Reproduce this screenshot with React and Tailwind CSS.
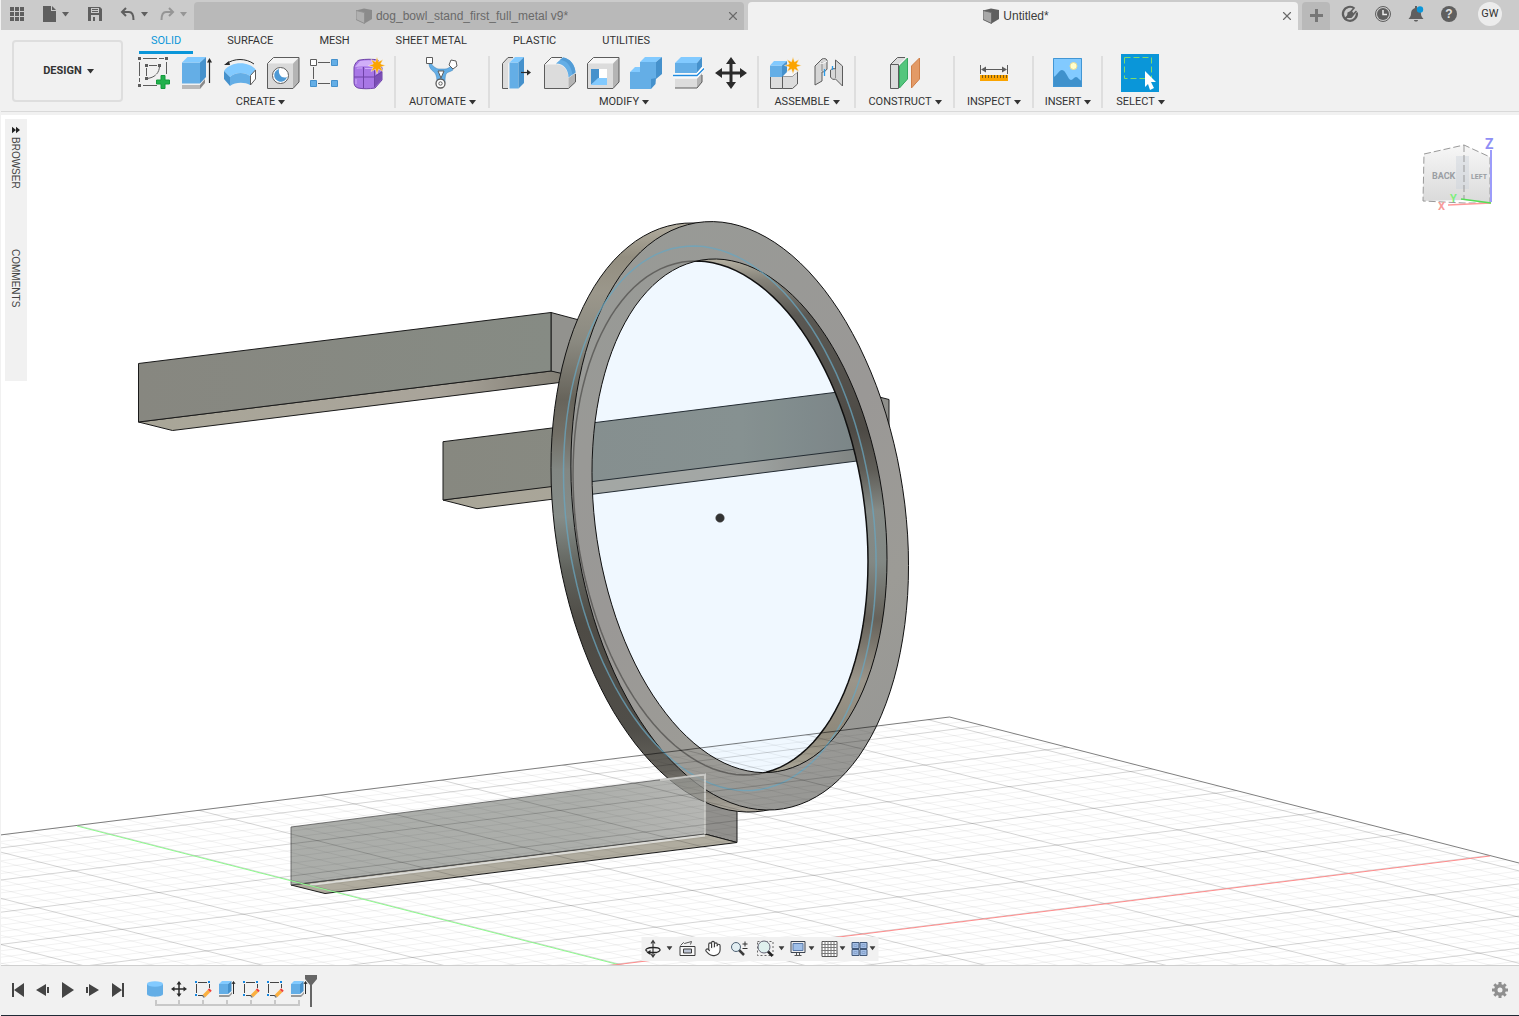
import React, { useState } from 'react';
import { Hand, X } from 'lucide-react';

const BLUE = '#64aee6';
const BLUE_LIGHT = '#82caff';
const BLUE_DARK = '#4591cc';
const INK = '#5c5c5c';

// Points of a slanted ellipse, given by its centre and half extents
const ellipse = (cx, cy, w, h, slant = 0.169) => {
  const k = Math.sqrt(1 - slant * slant);
  const pts = [];
  for (let i = 0; i < 120; i++) {
    const t = (i / 120) * Math.PI * 2;
    const x = cx + w * Math.cos(t);
    const y = cy + h * (slant * Math.cos(t) + k * Math.sin(t));
    pts.push(`${x.toFixed(1)} ${y.toFixed(1)}`);
  }
  return `M${pts.join('L')}Z`;
};

const star = (cx, cy, outer, inner, spikes = 8) =>
  Array.from({ length: spikes * 2 }, (_, i) => {
    const r = i % 2 ? inner : outer;
    const a = (i * Math.PI) / spikes - Math.PI / 2;
    return `${(cx + r * Math.cos(a)).toFixed(2)},${(cy + r * Math.sin(a)).toFixed(2)}`;
  }).join(' ');

const Icon = ({ size = 32, className = '', children }) => (
  <svg
    width={size}
    height={size}
    viewBox={`0 0 ${size} ${size}`}
    className={`shrink-0 overflow-visible ${className}`}
    fill="none"
    aria-hidden="true"
  >
    {children}
  </svg>
);

const Caret = ({ className = '' }) => (
  <svg width="7" height="5" viewBox="0 0 7 5" className={`shrink-0 ${className}`} fill="currentColor" aria-hidden="true">
    <path d="M0 0h7L3.500 4.500z" />
  </svg>
);

/* ---------- Ribbon icons ---------- */

const SketchIcon = () => (
  <Icon>
    <path d="M6 1.500h21M2.500 5v20M6 28.500h14M29.500 5v12" stroke={INK} strokeDasharray="14 2" />
    <path d="M12 8.500h8M9.500 11v8M22.500 9c0 7-5 12-13 12.500" stroke={INK} strokeDasharray="9 1" />
    <path d="M1 0h3v3H1zM28 0h3v3h-3zM1 27h3v3H1zM8 7h3v3H8zM21 7h3v3h-3zM8 20h3v3H8z" fill={INK} />
    <path d="M24 18.500h4V23h4.500v4H28v4.500h-4V27h-4.500v-4H24z" fill="#22b14c" stroke="#159a3c" />
  </Icon>
);

const ExtrudeIcon = () => (
  <Icon>
    <path d="M2 28h18v4H2z" fill="#b9b9b9" />
    <path d="M20 28l5-6v4l-5 6z" fill="#8a8a8a" />
    <path d="M2 5.500h18v21H2z" fill={BLUE} />
    <path d="M2 5.500L7.500 0H26l-6 5.500z" fill={BLUE_LIGHT} />
    <path d="M20 5.500L26 0v20l-6 6.500z" fill={BLUE_DARK} />
    <path d="M29.500 3v23" stroke="#2b2b2b" strokeWidth="1.200" />
    <path d="M27 5.500L29.500 1 32 5.500z" fill="#2b2b2b" />
  </Icon>
);

const RevolveIcon = () => (
  <Icon>
    <path d="M1 14C8 4 26 4 33 13l-6 6C22 15 12 15 7 20z" fill={BLUE_LIGHT} />
    <path d="M7 20c5-5 15-5 20-1v9c-5-3-15-3-20 1z" fill={BLUE} />
    <path d="M1 14l6 6v9l-6-7z" fill={BLUE_DARK} />
    <path d="M27.500 18.500L32.500 13v9l-5 6z" fill="#fff" stroke={INK} />
    <path d="M3 7C11 1 23 1 31 7" stroke="#2b2b2b" />
    <path d="M1 8l5-4 1 4z" fill="#2b2b2b" />
  </Icon>
);

const HoleIcon = () => (
  <Icon>
    <path d="M1.500 6.500l6-6H33L27 6.500z" fill="#f4f4f4" />
    <path d="M27 6.500l6-6v24.500l-6 6.500z" fill="#b4b4b4" />
    <path d="M1.500 6.500H27v25H1.500z" fill="#d9d9d9" />
    <path d="M1.500 6.500l6-6H33V25l-6 6.500H1.500z" stroke={INK} />
    <circle cx="14.500" cy="18.500" r="8" fill="#fff" stroke={INK} />
    <path d="M13 12a6.500 6.500 0 1 0 8 8c-5 2-9-2-8-8z" fill="#4d9ad6" />
  </Icon>
);

const PatternIcon = () => (
  <Icon>
    <path d="M9 5.500h12M4.500 10v12M9 26.500h12" stroke={INK} />
    <path d="M1.500 2.500h6v6h-6z" fill="#fff" stroke={INK} />
    <path d="M22.500 2.500h6v6h-6zM1.500 23.500h6v6h-6zM22.500 23.500h6v6h-6z" fill={BLUE} stroke={BLUE_DARK} />
  </Icon>
);

const FormIcon = () => (
  <Icon>
    <path d="M2 11c0-3 3-8 6-8 5-1 13-1 18 0l4 8v12l-7 8c-6 1-12 1-17 0-3-1-4-3-4-6z" fill="#a877e6" stroke="#6f43a8" />
    <path d="M3 10l5-6c6-1 11-1 17 0l-4 6c-6-1-12-1-18 0z" fill="#d0aef8" />
    <path d="M23 19l7-5v8l-7 8z" fill="#7b4fb5" />
    <path d="M11.500 10v21M2 20h20M22.500 10v20M22 20l8-5" stroke="#6f43a8" />
    <path d="M5 12c0-1 1-1 5-1M4 22v5M13 11.500h8" stroke="#d0aef8" />
    <polygon points={star(25, 8.5, 8.5, 4)} fill="#fba400" stroke="#f1f1f1" strokeWidth="0.500" />
  </Icon>
);

const AutomateIcon = () => (
  <Icon>
    <path d="M5 6c2 4 6 6 8 6h6c2 0 4-1 6-3l2 4c-3 2-6 2-7 4-1 3-1 5-1 9h-8c0-6-1-9-3-11C5 13 3 10 3 7z" fill={BLUE} stroke="#3f80b5" strokeWidth="0.500" />
    <path d="M12 14h6l-3 7z" fill="#fff" stroke={INK} />
    <path d="M0.500 0.500h6v6h-6z" fill="#fff" stroke={INK} />
    <path d="M25 3l5 1 1 5-4 3-4-4z" fill="#fff" stroke={INK} />
    <circle cx="14.500" cy="26.500" r="4.500" fill="#fff" stroke={INK} strokeWidth="1.300" />
    <circle cx="14.500" cy="26.500" r="1.700" stroke={INK} />
  </Icon>
);

const PressPullIcon = () => (
  <Icon>
    <path d="M2.500 6.500L8 .5h6l-6 6v25H2.500z" fill="#dcdcdc" />
    <path d="M8 .5L2.500 6.500v25H8M8 .5h5" stroke={INK} />
    <path d="M9.500 5.500h9v26h-9z" fill={BLUE} />
    <path d="M9.500 5.500L15 0h9l-5.500 5.500z" fill={BLUE_LIGHT} />
    <path d="M18.500 5.500L24 0v26l-5.500 5.500z" fill={BLUE_DARK} />
    <path d="M21 15.500h7" stroke="#2b2b2b" strokeWidth="1.200" />
    <path d="M27 12.500l4 3-4 3z" fill="#2b2b2b" />
  </Icon>
);

const FilletIcon = () => (
  <Icon>
    <path d="M1.500 7.500l7-7h11l-6 7c7 0 12 6 12 14v10h-24z" fill="#dcdcdc" />
    <path d="M1.500 7.500l7-7H19l-6 7z" fill="#f6f6f6" />
    <path d="M25.500 21l7-5v9l-7 6.500z" fill="#b4b4b4" />
    <path d="M13 6.500l7-6c7 1 12 7 12.500 15l-7 5c0-8-5-14-12.500-14z" fill={BLUE} />
    <path d="M20 .5c7 1 12 7 12.500 15l-3 2C28 8 23 3 17 3z" fill="#529cd6" />
    <path d="M19 .5H8.500l-7 7v24h24l7-6.500v-8" stroke={INK} />
  </Icon>
);

const ShellIcon = () => (
  <Icon>
    <path d="M1.500 6.500l6-6H33L27 6.500z" fill="#f6f6f6" />
    <path d="M27 6.500l6-6V25l-6 6.500z" fill="#b4b4b4" />
    <path d="M1.500 6.500H27v25H1.500z" fill="#dcdcdc" />
    <path d="M1.500 6.500l6-6H33V25l-6 6.500H1.500z" stroke={INK} />
    <path d="M5 12h16v16H5z" fill="#fff" />
    <path d="M5 12h8v9l-8 7z" fill={BLUE_DARK} />
    <path d="M5 28l7-7h9v7z" fill={BLUE_LIGHT} />
  </Icon>
);

const CombineIcon = () => (
  <Icon>
    <path d="M1 15h10V5h16v17h-5v10H1z" fill={BLUE} />
    <path d="M1 15l5-5h5v5zM11 5l5-5h17l-6 5z" fill={BLUE_LIGHT} />
    <path d="M27 5l6-5v17l-6 5zM22 22h5l-5 10zM27 21l-.5 6L22 32V22z" fill={BLUE_DARK} />
  </Icon>
);

const SplitIcon = () => (
  <Icon>
    <path d="M3 6h22v10H3z" fill={BLUE} />
    <path d="M3 6l6-6h21l-5 6z" fill={BLUE_LIGHT} />
    <path d="M25 6l5-6v10l-5 6z" fill={BLUE_DARK} />
    <path d="M3 22h22l5-6v9l-5 6H3z" fill="#dcdcdc" />
    <path d="M25 22l5-6v9l-5 6z" fill="#b4b4b4" />
    <path d="M3 31h22l5-6v-7" stroke={INK} />
    <path d="M1 18.500h24l7-8" stroke="#fff" strokeWidth="4" />
    <path d="M1 18.500h24l7-7" stroke="#1f8ade" strokeWidth="1.300" />
  </Icon>
);

const MoveIcon = ({ size = 32 }) => (
  <svg width={size} height={size} viewBox="0 0 32 32" className="shrink-0" fill="#2b2b2b" aria-hidden="true">
    <path d="M16 0l5 7h-3.500v7.500H25V11l7 5-7 5v-3.500h-7.500V25H21l-5 7-5-7h3.500v-7.500H7V21l-7-5 7-5v3.500h7.500V7H11z" />
  </svg>
);

const ComponentIcon = () => (
  <Icon>
    <path d="M1.500 19h12v12.500h-12z" fill="#dcdcdc" stroke={INK} />
    <path d="M13.500 19h10l5-4v12l-5 4.500h-10z" fill="#dcdcdc" stroke={INK} />
    <path d="M13.500 19l4-4h11l-5 4z" fill="#f8f8f8" />
    <path d="M1 8.500h12V20H1z" fill={BLUE} />
    <path d="M1 8.500L5 4h13l-5 4.500z" fill={BLUE_LIGHT} />
    <path d="M13 8.500L18 4v11l-5 5z" fill={BLUE_DARK} />
    <polygon points={star(24, 8.500, 8.500, 4)} fill="#fba400" stroke="#f1f1f1" strokeWidth="0.500" />
  </Icon>
);

const JointIcon = () => (
  <Icon>
    <path d="M3 28V9l7-7c2-.8 4-.5 5 1v9c-1 2-3 3-5 3v9z" fill="#d6d6d6" stroke={INK} />
    <path d="M10 5v9" stroke="#8a8a8a" />
    <path d="M8 6c2 1 5 0 7-2" stroke="#fff" />
    <path d="M30.500 29V9l-7-6v9c-2-1-4 0-5 1v7c1 2 3 3 5 2z" fill="#d6d6d6" stroke={INK} />
    <path d="M23.500 12v9" stroke="#8a8a8a" />
    <path d="M12.500 12v7M20.500 9v4" stroke="#2b9be8" strokeWidth="1.300" />
  </Icon>
);

const PlaneIcon = () => (
  <Icon>
    <path d="M1.500 7.500l7-7H17l-8 7v24H1.500z" fill="#dcdcdc" />
    <path d="M16 .5H8.500l-7 7v24h8v-24h-8" stroke={INK} />
    <path d="M10.500 9l8-8v21l-8 9z" fill="#54c67d" stroke="#35a65f" />
    <path d="M22.500 9l8-8v21l-8 9z" fill="#e39a66" stroke="#cf7f48" />
  </Icon>
);

const MeasureIcon = () => (
  <Icon>
    <path d="M2.500 8v9M29.500 8v9M5 12.500h22" stroke={INK} />
    <path d="M3 12.500l5-3v6zM29 12.500l-5-3v6z" fill={INK} />
    <path d="M2 18h28v6H2z" fill="#fba400" />
    <path d="M4.500 18v3M7.500 18v3M10.500 18v3M13.500 18v3M16.500 18v3M19.500 18v3M22.500 18v3M25.500 18v3M28.500 18v3" stroke="#7c5a12" />
  </Icon>
);

const ImageIcon = () => (
  <Icon>
    <path d="M1 1h29v29H1z" fill={BLUE_LIGHT} />
    <path d="M1 20c3 0 6-7 9-7 4 0 6 10 9 10 2 0 3-3 5-3s3 3 6 4v6H1z" fill="#3f91cc" />
    <circle cx="21.500" cy="9" r="3.500" fill="#ffffcc" stroke="#e6dd9a" />
    <path d="M1.500 1.500h28v28h-28z" stroke="#4296d4" />
  </Icon>
);

const SelectIcon = () => (
  <svg width="38" height="38" viewBox="0 0 38 38" fill="none" className="bg-[#0a96d9]" aria-hidden="true">
    <path d="M3.500 3.500h27v21h-27z" stroke="#7ddc6b" strokeDasharray="6 3" />
    <path d="M24 17l11 11h-5l3 6-4 2-2-6-3 3z" fill="#fff" />
  </svg>
);

const groups = [
  { name: 'CREATE', width: 'w-[270px]', icons: [
    ['Create Sketch', SketchIcon], ['Extrude', ExtrudeIcon], ['Revolve', RevolveIcon],
    ['Hole', HoleIcon], ['Rectangular Pattern', PatternIcon], ['Create Form', FormIcon],
  ] },
  { name: 'AUTOMATE', width: 'w-[94px]', icons: [['Automated Modeling', AutomateIcon]] },
  { name: 'MODIFY', width: 'w-[269px]', icons: [
    ['Press Pull', PressPullIcon], ['Fillet', FilletIcon], ['Shell', ShellIcon],
    ['Combine', CombineIcon], ['Split Body', SplitIcon], ['Move/Copy', MoveIcon],
  ] },
  { name: 'ASSEMBLE', width: 'w-[97px]', icons: [['New Component', ComponentIcon], ['Joint', JointIcon]] },
  { name: 'CONSTRUCT', width: 'w-[99px]', icons: [['Offset Plane', PlaneIcon]] },
  { name: 'INSPECT', width: 'w-[79px]', icons: [['Measure', MeasureIcon]] },
  { name: 'INSERT', width: 'w-[69px]', icons: [['Canvas', ImageIcon]] },
  { name: 'SELECT', width: 'w-[76px]', icons: [['Select', SelectIcon]] },
];

const ribbonTabs = ['SOLID', 'SURFACE', 'MESH', 'SHEET METAL', 'PLASTIC', 'UTILITIES'];

/* ---------- Title bar ---------- */

const DocCube = ({ dim }) => (
  <svg width="16" height="16" viewBox="0 0 16 16" className={dim ? 'shrink-0 opacity-50' : 'shrink-0'} aria-hidden="true">
    <path d="M0 2.500L8 .5l8 1.500v9L8.500 15.500 0 11.500z" fill="#5f5f5f" />
    <path d="M0 2.500l8.500 2v11L0 11.500z" fill="#a9a9a9" />
    <path d="M0 2.500l8.500 2v11L0 11.500z" fill="none" stroke="#6b6b6b" />
  </svg>
);

const DocTab = ({ title, active }) => (
  <div
    className={`flex h-7 min-w-0 flex-1 items-center rounded-t pr-1 text-xs ${
      active ? 'bg-[#f1f1f1] text-[#3c3c3c]' : 'bg-[#b9b9b9] text-[#6a6a6a]'
    }`}
  >
    <button type="button" className="flex min-w-0 flex-1 items-center justify-center gap-1 pl-1">
      <DocCube dim={!active} />
      <span className="truncate">{title}</span>
    </button>
    <button type="button" aria-label={`Close ${title}`} className="text-[#6a6a6a]">
      <X size={14} strokeWidth={2} />
    </button>
  </div>
);

const TitleBar = () => (
  <div className="flex h-[30px] items-end bg-[#cbcbcb] text-[#5f5f5f]">
    <div className="flex h-7 w-[193px] shrink-0 items-center pb-1 pl-[9px]">
      <button type="button" aria-label="Data panel">
        <Icon size={14}>
          <path d="M0 0h4v4H0zM5 0h4v4H5zM10 0h4v4h-4zM0 5h4v4H0zM5 5h4v4H5zM10 5h4v4h-4zM0 10h4v4H0zM5 10h4v4H5zM10 10h4v4h-4z" fill="currentColor" />
        </Icon>
      </button>
      <button type="button" aria-label="File" className="ml-[19px] flex items-center gap-[5px]">
        <Icon size={14}>
          <path d="M0 -1h8v5h5v11H0zM9 -1l4 4H9z" fill="currentColor" />
        </Icon>
        <Caret />
      </button>
      <button type="button" aria-label="Save" className="ml-[19px]">
        <Icon size={14}>
          <path fillRule="evenodd" d="M0 0h12l2 2v12H0zM3 1v5h8V1zM3 8v6h8V8zM4 2h6v1H4zM4 4h6v1H4zM5 10h2v4H5z" fill="currentColor" />
        </Icon>
      </button>
      <button type="button" aria-label="Undo" className="ml-[19px] flex items-center gap-[6px]">
        <Icon size={14}>
          <path d="M5 1L1 5l4 4M1.500 5H8c3 0 4.500 3 4.500 8" stroke="currentColor" strokeWidth="2" />
        </Icon>
        <Caret />
      </button>
      <button type="button" aria-label="Redo" className="ml-[12px] flex items-center gap-[6px] text-[#969696]">
        <Icon size={14}>
          <path d="M9 1l4 4-4 4M12.500 5H6C3 5 1.500 8 1.500 13" stroke="currentColor" strokeWidth="2" />
        </Icon>
        <Caret />
      </button>
    </div>
    <div className="flex min-w-0 flex-1 gap-1">
      <DocTab title="dog_bowl_stand_first_full_metal v9*" />
      <DocTab title="Untitled*" active />
    </div>
    <button type="button" aria-label="New design" className="ml-1 flex h-7 w-7 shrink-0 items-center justify-center rounded-t bg-[#b9b9b9] pb-px text-[#777]">
      <Icon size={13}>
        <path d="M5 0h3v5h5v3H8v5H5V8H0V5h5z" fill="currentColor" />
      </Icon>
    </button>
    <div className="flex h-7 w-[189px] shrink-0 items-center gap-[17px] pb-1 pl-3">
      <button type="button" aria-label="Extensions">
        <Icon size={16}>
          <path d="M12.500 2.500A7 7 0 1 0 14.800 6.500" stroke="currentColor" strokeWidth="2.200" />
          <path d="M2.500 13.500l4-4" stroke="currentColor" strokeWidth="2.200" />
          <path d="M5.500 6.500l4-2 3 4-3 3.500H5z" fill="currentColor" />
          <path d="M9 5.500l3-3.500M11.500 8l3-3" stroke="currentColor" strokeWidth="1.600" />
        </Icon>
      </button>
      <button type="button" aria-label="Job status">
        <Icon size={16}>
          <circle cx="8" cy="8" r="7.500" stroke="currentColor" />
          <circle cx="8" cy="8" r="6" fill="currentColor" />
          <path d="M8 4v4.500h4" stroke="#eee" strokeWidth="1.500" />
        </Icon>
      </button>
      <button type="button" aria-label="Notifications">
        <Icon size={16}>
          <path d="M7 0h2v2c3 1 4 3 4 6 0 2 1 3 2.500 5H.500C2 11 3 10 3 8c0-3 1-5 4-6zM6 14h4c0 2-4 2-4 0z" fill="currentColor" />
          <circle cx="12" cy="3.500" r="3.200" fill="#0a96d9" />
        </Icon>
      </button>
      <button type="button" aria-label="Help" className="flex h-4 w-4 items-center justify-center rounded-full bg-[#5f5f5f] text-xs font-bold text-[#e0e0e0]">
        ?
      </button>
      <button type="button" aria-label="Account" className="ml-1 flex h-6 w-6 items-center justify-center rounded-full bg-[#ececec] font-[Roboto,sans-serif] text-[11px] text-[#333]">
        GW
      </button>
    </div>
  </div>
);

/* ---------- Ribbon ---------- */

const Ribbon = () => {
  const [activeTab, setActiveTab] = useState('SOLID');

  return (
    <div className="flex h-[85px] border-b-[3px] border-[#f1f1f1] bg-[#f1f1f1] font-[Roboto,sans-serif] text-[11px] text-[#333]">
      <div className="flex flex-1 border-b border-[#d9d9d9] pl-[11px]">
        <button
          type="button"
          className="mt-[10px] flex h-[62px] w-[111px] shrink-0 items-center justify-center gap-[5px] rounded border-2 border-[#dedede] pl-[2px] font-bold"
        >
          DESIGN <Caret />
        </button>
        <div className="ml-[3px] flex min-w-0 flex-1 flex-col">
          <nav className="flex h-6 shrink-0 gap-[22px] pl-[13px]">
            {ribbonTabs.map((tab) => (
              <button
                key={tab}
                type="button"
                onClick={() => setActiveTab(tab)}
                className={`border-b-[3px] px-3 pt-px leading-5 whitespace-nowrap ${
                  tab === activeTab ? 'border-[#0a96d9] text-[#0a96d9]' : 'border-transparent'
                }`}
              >
                {tab}
              </button>
            ))}
          </nav>
          <div className="flex pt-[2px]">
            {groups.map((group) => (
              <div
                key={group.name}
                className={`flex h-[52px] shrink-0 flex-col items-center border-r-2 border-[#dedede] last:border-transparent ${group.width}`}
              >
                <div className="flex h-[34px] shrink-0 items-center gap-[11px]">
                  {group.icons.map(([label, Glyph]) => (
                    <button key={label} type="button" aria-label={label}>
                      <Glyph />
                    </button>
                  ))}
                </div>
                <button type="button" className="mt-[5px] flex shrink-0 items-center gap-[3px] pl-px leading-[14px]">
                  {group.name} <Caret />
                </button>
              </div>
            ))}
          </div>
        </div>
      </div>
    </div>
  );
};

/* ---------- 3D canvas ---------- */

const frontOuter = ellipse(739.7, 515.8, 168.8, 294.2);
const frontInner = ellipse(739.5, 515.8, 147.5, 256.8);
const backOuter = ellipse(720, 517.5, 169, 294.5);
const backInner = ellipse(720.5, 518, 147.5, 257);
const sketchCircle = ellipse(719.8, 518.3, 156.3, 272.3);

// Two families of nearly parallel lines make the ground grid
const gridLines = [];
for (let i = -4; i < 80; i++) {
  const b = 848 + 6.43 * i;
  gridLines.push({ d: `M0 ${b.toFixed(1)}L1519 ${(b - 189.1).toFixed(1)}`, major: i % 5 === 0 });
}
for (let j = -36; j < 40; j++) {
  const b = 805.7 - 9.24 * j;
  gridLines.push({ d: `M0 ${b.toFixed(1)}L1519 ${(b + 388.6).toFixed(1)}`, major: j % 5 === 0 });
}

const MiddleBar = () => (
  <g stroke="#1a1a1a" strokeLinejoin="round">
    <path d="M443 500l34 8.700L889 457v-10l-29-2z" fill="url(#under)" />
    <path d="M852 390l37 9.500V449l-37-2z" fill="#8f8f8b" />
    <path d="M443 441.700L870 388v59.300L443 500z" fill="url(#barFace)" />
  </g>
);

const Scene = () => (
  <svg viewBox="1 115 1518 850" preserveAspectRatio="xMidYMid slice" className="absolute inset-0 h-full w-full" role="img" aria-label="Model view">
    <defs>
      <linearGradient id="barFace">
        <stop offset="0" stopColor="#878880" />
        <stop offset="0.700" stopColor="#888c84" />
        <stop offset="1" stopColor="#7b7d78" />
      </linearGradient>
      <linearGradient id="topBar">
        <stop offset="0" stopColor="#878780" />
        <stop offset="1" stopColor="#868b84" />
      </linearGradient>
      <linearGradient id="under">
        <stop offset="0" stopColor="#a9a698" />
        <stop offset="0.650" stopColor="#a9a49a" />
        <stop offset="1" stopColor="#77746a" />
      </linearGradient>
      <linearGradient id="lowerFace">
        <stop offset="0" stopColor="#8b8e89" />
        <stop offset="0.700" stopColor="#8c8f8a" />
        <stop offset="1" stopColor="#999a96" />
      </linearGradient>
      <linearGradient id="side" gradientUnits="userSpaceOnUse" x1="0" y1="222" x2="0" y2="812">
        <stop offset="0" stopColor="#b3aea0" />
        <stop offset="0.060" stopColor="#938e80" />
        <stop offset="0.120" stopColor="#9b978b" />
        <stop offset="0.200" stopColor="#8b8a81" />
        <stop offset="0.300" stopColor="#67645b" />
        <stop offset="0.360" stopColor="#726f66" />
        <stop offset="0.420" stopColor="#828783" />
        <stop offset="0.500" stopColor="#858c88" />
        <stop offset="0.590" stopColor="#60625c" />
        <stop offset="0.680" stopColor="#4e4b45" />
        <stop offset="0.860" stopColor="#504e49" />
        <stop offset="0.930" stopColor="#64625c" />
        <stop offset="1" stopColor="#b0aba0" />
      </linearGradient>
      <linearGradient id="wall" gradientUnits="userSpaceOnUse" x1="0" y1="259" x2="0" y2="773">
        <stop offset="0" stopColor="#b5b1a2" />
        <stop offset="0.040" stopColor="#858279" />
        <stop offset="0.110" stopColor="#5a5853" />
        <stop offset="0.330" stopColor="#4d4a45" />
        <stop offset="0.410" stopColor="#5f5d57" />
        <stop offset="0.490" stopColor="#858a86" />
        <stop offset="0.590" stopColor="#828884" />
        <stop offset="0.700" stopColor="#66625a" />
        <stop offset="0.820" stopColor="#9a958a" />
        <stop offset="0.920" stopColor="#8f897b" />
        <stop offset="1" stopColor="#aaa697" />
      </linearGradient>
      <linearGradient id="face" gradientUnits="userSpaceOnUse" x1="570" y1="300" x2="910" y2="700">
        <stop offset="0" stopColor="#989a96" />
        <stop offset="0.500" stopColor="#9a9896" />
        <stop offset="0.800" stopColor="#9c9b96" />
        <stop offset="1" stopColor="#989895" />
      </linearGradient>
      <clipPath id="hole"><path d={frontInner} /></clipPath>
      <clipPath id="backHole"><path d={backInner} /></clipPath>
      <clipPath id="faceOnly"><path d={`${frontOuter}${frontInner}`} clipRule="evenodd" /></clipPath>
      <clipPath id="ground"><path d="M0 835L949.500 717 1519 863v160H0z" /></clipPath>
    </defs>

    <rect x="0" y="115" width="1519" height="850" fill="#fff" />

    {/* Upper leg */}
    <g stroke="#1a1a1a" strokeLinejoin="round">
      <path d="M138.500 422l34 8.500L600 377.500 551 371z" fill="url(#under)" />
      <path d="M551 312.500l45 12v57L551 371z" fill="#92928e" />
      <path d="M138.500 363.500L551 312.500V371L138.500 422z" fill="url(#topBar)" />
    </g>

    <MiddleBar />

    {/* Lower leg, end and underside */}
    <g stroke="#1a1a1a" strokeLinejoin="round">
      <path d="M705 774l32 9v59.500l-32-8.500z" fill="#91908d" />
      <path d="M291 885l34 8.500L737 842.500 705 834z" fill="#b0ac9f" />
    </g>

    {/* Ring */}
    <path d={backOuter} fill="url(#side)" stroke="#111" />
    <path d={`${frontOuter}${frontInner}`} fillRule="evenodd" fill="url(#face)" />
    <g clipPath="url(#hole)">
      <path d={frontInner} fill="url(#wall)" />
      <g clipPath="url(#backHole)">
        <path d={backInner} fill="#fff" />
        <MiddleBar />
        <path d={backInner} fill="#76bfff" fillOpacity="0.110" />
      </g>
      <path d={backInner} fill="none" stroke="#111" strokeWidth="1.500" />
    </g>
    <path d={backInner} clipPath="url(#faceOnly)" fill="none" stroke="#555451" strokeOpacity="0.800" strokeWidth="1.500" />
    <path d={frontOuter} fill="none" stroke="#111" />
    <path d={frontInner} fill="none" stroke="#111" />
    <path d={sketchCircle} fill="none" stroke="#69a6bf" strokeOpacity="0.750" strokeWidth="1.500" />
    <circle cx="720" cy="518" r="4.300" fill="#333" stroke="#555" strokeWidth="0.500" />

    {/* Lower leg, highlighted face */}
    <path d="M291 827l414-53v60l-414 51z" fill="url(#lowerFace)" fillOpacity="0.720" stroke="#555" strokeWidth="0.800" />
    <path d="M660 780l45-5.500V834" fill="none" stroke="#dcdcd8" strokeOpacity="0.800" strokeWidth="2" />
    <path d="M705 835.500L310 885" fill="none" stroke="#dcdcd8" strokeWidth="2" />

    <g clipPath="url(#ground)" stroke="#000">
      {gridLines.map((line) => (
        <path key={line.d} d={line.d} strokeOpacity={line.major ? 0.17 : 0.055} />
      ))}
    </g>
    <path d="M0 835L949.500 717 1519 863" fill="none" stroke="#000" strokeOpacity="0.500" />
    <path d="M77 826l543 139" stroke="#8dfa8d" />
    <path d="M1490 856L610 965.500" stroke="#ff8c8c" />
  </svg>
);

const ViewCube = () => (
  <svg width="76" height="80" viewBox="0 0 76 80" className="absolute top-[19px] right-[23px] font-[Roboto,sans-serif] font-bold" aria-label="View cube">
    <defs>
      <linearGradient id="cube" x1="0" y1="0" x2="0" y2="1">
        <stop offset="0" stopColor="#f7f7f7" />
        <stop offset="1" stopColor="#dadada" />
      </linearGradient>
    </defs>
    <path d="M4 20l40-9v55L3 67z" fill="url(#cube)" />
    <path d="M44 11l26 12v46l-26-3z" fill="url(#cube)" />
    <path d="M36 22h13v33H36z" fill="#cdd3dc" fillOpacity="0.450" />
    <path d="M4 20l40-9 26 12v46H44L3 67zM44 11v55" fill="none" stroke="#999" strokeDasharray="7 3" />
    <text x="12" y="45" fontSize="9" fill="#9a9ea3">BACK</text>
    <text x="51" y="45" fontSize="7" fill="#9a9ea3">LEFT</text>
    <path d="M71 16v52" stroke="#9c9cfa" strokeWidth="2" />
    <path d="M71 69l-43 2" stroke="#ff9a9a" strokeWidth="1.500" />
    <path d="M71 69l-30-4" stroke="#55dd55" strokeWidth="1.500" />
    <text x="65" y="15" fontSize="14" fill="#8f8ff5">Z</text>
    <text x="30" y="68" fontSize="11" fill="#7df07d">Y</text>
    <text x="18" y="76" fontSize="11" fill="#f79a9a">X</text>
  </svg>
);

const SideDock = () => (
  <aside className="relative mt-1 ml-1 flex h-[262px] w-[22px] flex-col items-center bg-[#f1f1f1] pt-[7px] pr-[2px] text-[10px] text-[#444]">
    <button type="button" aria-label="Expand browser" className="pl-[2px]">
      <Icon size={10} className="h-2">
        <path d="M0 1l5 4-5 4zM5 1l5 4-5 4z" fill="#222" />
      </Icon>
    </button>
    <button type="button" className="mt-[3px] h-[112px] text-left leading-[14px] [writing-mode:vertical-rl]">BROWSER</button>
    <button type="button" className="text-left leading-[14px] [writing-mode:vertical-rl]">COMMENTS</button>
  </aside>
);

const NavBar = () => (
  <div className="absolute bottom-1 left-1/2 flex h-6 w-[237px] -translate-x-1/2 items-center justify-between bg-[#f1f1f1] px-[3px] pb-[2px] text-[#3c3c3c]">
    <button type="button" aria-label="Orbit" className="flex items-center gap-[5px]">
      <Icon size={17}>
        <path d="M8.500 1v15M6.500 3.500l2-3 2 3M6.500 14l2 3 2-3" stroke="#3c3c3c" strokeWidth="1.200" />
        <path d="M5 12.500h7c6-2 4-5-3-5-6 0-10 2-6 4" stroke="#222" strokeWidth="1.300" />
        <path d="M2 12.500l4-2.500v5z" fill="#222" />
      </Icon>
      <Caret className="w-[6px]" />
    </button>
    <div className="flex items-center gap-[9px]">
      <button type="button" aria-label="Look at">
        <Icon size={17}>
          <path d="M1.500 6.500h15v9h-15z" fill="#f8f8f8" stroke="#3c3c3c" />
          <path d="M5 9h8v4H5z" fill="#bcc4d4" stroke="#3c3c3c" />
          <path d="M2 5.500l3-3 1 1 7-2-1 3" stroke="#555" />
        </Icon>
      </button>
      <button type="button" aria-label="Pan">
        <Hand size={17} strokeWidth={1.6} fill="#fff" />
      </button>
      <button type="button" aria-label="Zoom">
        <Icon size={17}>
          <path d="M8.500 10l5 5" stroke="#3c3c3c" strokeWidth="2.500" />
          <circle cx="5.500" cy="7" r="4.500" fill="#e2eef2" stroke="#4f6274" />
          <path d="M12 4h5M14.500 1.500v5M12 8.500h5" stroke="#333" />
        </Icon>
      </button>
      <button type="button" aria-label="Fit" className="flex items-center gap-[5px]">
        <Icon size={17}>
          <path d="M1 1.500h15.500v14H1z" stroke="#666" strokeDasharray="2 2" />
          <path d="M11 11l5 5" stroke="#222" strokeWidth="2.500" />
          <circle cx="7.500" cy="7" r="6" fill="#dff0ee" stroke="#667" />
        </Icon>
        <Caret className="w-[6px]" />
      </button>
    </div>
    <button type="button" aria-label="Display settings" className="flex items-center gap-[2px]">
      <Icon size={17}>
        <path d="M1.500 1.500h14v11h-14z" fill="#eee" stroke="#3c4450" />
        <path d="M3.500 3.500h10v7h-10z" fill="#9fbfe8" stroke="#5878a8" />
        <path d="M5 15.500h7M7 13v2M10 13v2" stroke="#555" />
      </Icon>
      <Caret className="w-[6px]" />
    </button>
    <button type="button" aria-label="Grid and snaps" className="flex items-center gap-[2px]">
      <Icon size={17}>
        <path d="M1.500 1.500h15v15h-15z" fill="#fff" stroke="#555" />
        <path d="M4.500 1v15M7.500 1v15M10.500 1v15M13.500 1v15M1 4.500h15M1 7.500h15M1 10.500h15M1 13.500h15" stroke="#777" />
      </Icon>
      <Caret className="w-[6px]" />
    </button>
    <button type="button" aria-label="Viewports" className="flex items-center gap-[2px]">
      <Icon size={17}>
        <path d="M1.500 2.500h7v6h-7zM9.500 2.500h7v6h-7zM1.500 9.500h7v6h-7zM9.500 9.500h7v6h-7z" fill="#a5c0e6" stroke="#425878" />
        <path d="M3.500 4.500h3v2h-3zM11.500 4.500h3v2h-3zM3.500 11.500h3v2h-3zM11.500 11.500h3v2h-3z" stroke="#8aa6d0" />
      </Icon>
      <Caret className="w-[6px]" />
    </button>
  </div>
);

/* ---------- Timeline ---------- */

const PLAYBACK = [
  ['Go to start', 'M2 1h2v14H2zM14 1v14L4 8z'],
  ['Step back', 'M11 2v12L1 8zM12 5h2v6h-2z'],
  ['Play', 'M2 0l12 8-12 8z'],
  ['Step forward', 'M4 2v12l10-6zM1 5h2v6H1z'],
  ['Go to end', 'M12 1h2v14h-2zM2 1v14l10-7z'],
];

const BodyFeature = () => (
  <Icon size={16}>
    <path d="M0 3v10c0 3.500 16 3.500 16 0V3z" fill={BLUE} />
    <ellipse cx="8" cy="3" rx="8" ry="2.700" fill={BLUE_LIGHT} />
  </Icon>
);

const SketchFeature = () => (
  <Icon size={16}>
    <path d="M3 1.500h9M1.500 3v9M3 14.500h5M14.500 3v4" stroke="#444" />
    <path d="M0 0h2v2H0zM13 0h2v2h-2zM0 13h2v2H0z" fill="#1687e0" />
    <path d="M9 15l5-5" stroke="#fbb040" strokeWidth="3.500" />
    <path d="M14 10l1.500-1.500" stroke="#f0433a" strokeWidth="3.500" />
    <path d="M8 16l1-1" stroke="#777" strokeWidth="2.500" />
  </Icon>
);

const ExtrudeFeature = () => (
  <Icon size={16}>
    <path d="M0 14h10l3-3v2l-3 3H0z" fill="#999" />
    <path d="M0 3h9v10H0z" fill={BLUE} />
    <path d="M0 3l3-3h9.500L9 3z" fill={BLUE_LIGHT} />
    <path d="M9 3l3.500-3v10L9 13z" fill={BLUE_DARK} />
    <path d="M14.500 1v12M13 3l1.500-2.500L16 3" stroke="#2b2b2b" />
  </Icon>
);

const MoveFeature = () => <MoveIcon size={16} />;

const features = [
  ['Base body', BodyFeature], ['Move', MoveFeature], ['Sketch 1', SketchFeature], ['Extrude 1', ExtrudeFeature],
  ['Sketch 2', SketchFeature], ['Sketch 3', SketchFeature], ['Extrude 2', ExtrudeFeature],
];

const Timeline = () => (
  <footer className="flex h-[51px] shrink-0 items-start border-t border-b border-t-[#cfcfcf] border-b-[#1f2a36] bg-[#f1f1f1] pr-[11px] pl-[9px]">
    <div className="flex gap-[9px] pt-4 text-[#444]">
      {PLAYBACK.map(([label, d]) => (
        <button key={label} type="button" aria-label={label}>
          <Icon size={16}><path d={d} fill="currentColor" /></Icon>
        </button>
      ))}
    </div>
    <div className="ml-[21px] pt-[15px]">
      <div className="flex gap-2">
        {features.map(([label, Glyph]) => (
          <button key={label} type="button" aria-label={label}>
            <Glyph />
          </button>
        ))}
      </div>
      <svg width="160" height="8" viewBox="0 0 160 8" fill="none" className="mt-[2px]" aria-hidden="true">
        <path d="M9 1v5h143V1M32 1v5M56 1v5M80 1v5M104 1v5M128 1v5" stroke="#c8c8c8" strokeWidth="2" />
      </svg>
    </div>
    <svg width="12" height="32" viewBox="0 0 12 32" className="-ml-[2px] mt-[9px]" aria-hidden="true">
      <path d="M0 0h12v4L7 10v22H5V10L0 4z" fill="#666" />
    </svg>
    <button type="button" aria-label="Timeline settings" className="mt-4 ml-auto">
      <Icon size={16}>
        <circle cx="8" cy="8" r="4.200" stroke="#8f8f8f" strokeWidth="3.400" />
        <path d="M8 0v3M8 13v3M0 8h3M13 8h3M2.300 2.300l2 2M11.700 11.700l2 2M2.300 13.700l2-2M11.700 4.300l2-2" stroke="#8f8f8f" strokeWidth="3" />
      </Icon>
    </button>
  </footer>
);

const App = () => (
  <div className="flex h-screen flex-col overflow-hidden border-l border-[#f1f1f1] bg-white font-['Liberation_Sans',Arial,sans-serif]">
    <header className="shrink-0">
      <TitleBar />
      <Ribbon />
    </header>
    <main className="relative min-h-0 flex-1 overflow-hidden">
      <Scene />
      <SideDock />
      <ViewCube />
      <NavBar />
    </main>
    <Timeline />
  </div>
);

export default App;
